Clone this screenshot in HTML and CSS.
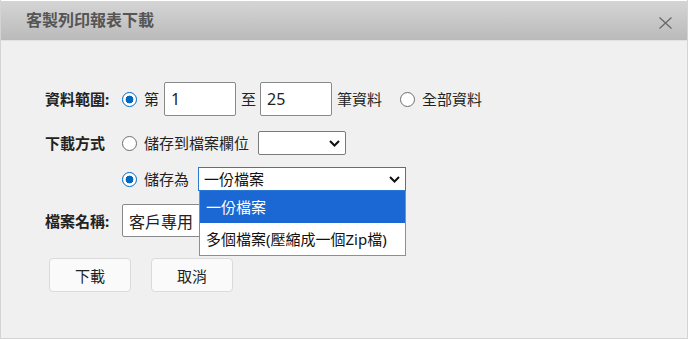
FILE: index.html
```html
<!DOCTYPE html>
<html lang="zh-Hant">
<head>
  <meta charset="UTF-8">
  <title>客製列印報表下載</title>
  <link rel="stylesheet" href="styles.css">
</head>
<body>
  <div class="dialog">
    <div class="dialog-header">
      <span class="dialog-title">客製列印報表下載</span>
      <span class="dialog-close">
        <svg width="13" height="12" viewBox="0 0 13 12"><path d="M0.5 0.5 L12.5 11.5 M12.5 0.5 L0.5 11.5" stroke="#666" stroke-width="1.2" fill="none"/></svg>
      </span>
    </div>

    <div class="dialog-body">
      <div class="form-row row-range">
        <label class="form-label">資料範圍:</label>
        <input type="radio" name="range" class="radio" checked>
        <span class="radio-text">第</span>
        <input type="text" class="text-input num-input" value="1">
        <span class="mid-text">至</span>
        <input type="text" class="text-input num-input" value="25">
        <span class="mid-text">筆資料</span>
        <input type="radio" name="range" class="radio radio-all">
        <span class="radio-text">全部資料</span>
      </div>

      <div class="form-row row-method">
        <label class="form-label">下載方式</label>
        <input type="radio" name="method" class="radio">
        <span class="radio-text">儲存到檔案欄位</span>
        <div class="select-wrap field-select">
          <select class="select"></select>
          <svg class="chevron" width="11" height="7" viewBox="0 0 11 7"><path d="M1 1 L5.5 5.5 L10 1" stroke="#111" stroke-width="2" fill="none"/></svg>
        </div>
      </div>

      <div class="form-row row-saveas">
        <span class="form-label"></span>
        <input type="radio" name="method" class="radio" checked>
        <span class="radio-text">儲存為</span>
        <div class="select-wrap file-select">
          <select class="select select-open">
            <option>一份檔案</option>
            <option>多個檔案(壓縮成一個Zip檔)</option>
          </select>
          <svg class="chevron" width="11" height="7" viewBox="0 0 11 7"><path d="M1 1 L5.5 5.5 L10 1" stroke="#111" stroke-width="2" fill="none"/></svg>
          <ul class="dropdown">
            <li class="dropdown-item active">一份檔案</li>
            <li class="dropdown-item">多個檔案(壓縮成一個Zip檔)</li>
          </ul>
        </div>
      </div>

      <div class="form-row row-name">
        <label class="form-label">檔案名稱:</label>
        <input type="text" class="text-input name-input" value="客戶專用">
      </div>

      <div class="button-row">
        <button class="btn">下載</button>
        <button class="btn">取消</button>
      </div>
    </div>
  </div>
</body>
</html>
```

FILE: styles.css
```css
* {
  box-sizing: border-box;
}

body {
  margin: 0;
  font-family: "Noto Sans", "Noto Sans CJK TC", sans-serif;
  color: #222;
  background: #fff;
}

.dialog {
  width: 688px;
  height: 339px;
  background: #f0f0f0;
  border: 1px solid #d4d4d4;
  border-top: none;
}

.dialog-header {
  height: 41px;
  display: flex;
  align-items: center;
  justify-content: space-between;
  padding: 0 15px 0 25px;
  background: linear-gradient(#d5d5d5, #bababa);
  border-top: 1px solid #fff;
  border-bottom: 1px solid #e2e2e2;
}

.dialog-title {
  font-size: 16px;
  font-weight: bold;
  color: #555;
  line-height: 20px;
  margin-top: -2px;
}

.dialog-close {
  display: flex;
  margin-top: 4px;
}

.dialog-body {
  padding: 41px 0 0 44px;
}

.form-row {
  display: flex;
  align-items: center;
  font-size: 15px;
  line-height: 20px;
}

.row-range {
  height: 34px;
}

.row-method {
  height: 24px;
  margin-top: 15px;
}

.row-saveas {
  height: 24px;
  margin-top: 12px;
}

.row-name {
  height: 33px;
  margin-top: 13px;
}

.form-label {
  width: 77px;
  font-weight: bold;
  flex-shrink: 0;
}

.radio {
  appearance: none;
  width: 15px;
  height: 15px;
  margin: 0 7px 0 0;
  border: 1px solid #6d6d6d;
  border-radius: 50%;
  background: #fff;
  flex-shrink: 0;
}

.radio:checked {
  border: 1.5px solid #0067c0;
  background: radial-gradient(circle, #0067c0 0 3.6px, #fff 4.2px);
}

.radio-all {
  margin-left: 14px;
}

.radio-text {
  white-space: nowrap;
}

.mid-text {
  margin: 0 4px 0 5px;
  white-space: nowrap;
}

.row-range .radio-text:first-of-type {
  margin-right: 5px;
}

.text-input {
  height: 34px;
  border: 1px solid #8a8a8a;
  border-radius: 2px;
  background: #fff;
  font: inherit;
  font-size: 16px;
  color: #222;
  padding: 0 6px;
  outline: none;
}

.num-input {
  width: 72px;
}

.name-input {
  width: 200px;
  height: 33px;
}

.select-wrap {
  position: relative;
  height: 24px;
  margin-left: 9px;
}

.field-select {
  width: 88px;
}

.file-select {
  width: 208px;
}

.select {
  appearance: none;
  width: 100%;
  height: 24px;
  border: 1px solid #7a7a7a;
  border-radius: 2px;
  background: #fff;
  font: inherit;
  font-size: 15px;
  color: #111;
  padding: 0 5px;
  outline: none;
}

.select-open {
  border-color: #2a78d4;
  border-radius: 0;
}

.chevron {
  position: absolute;
  right: 6px;
  top: 9px;
  pointer-events: none;
}

.dropdown {
  position: absolute;
  top: 24px;
  left: 1px;
  width: 207px;
  margin: 0;
  padding: 0;
  list-style: none;
  background: #fff;
  border: 1px solid #8f8f8f;
  border-top: none;
  z-index: 2;
}

.dropdown-item {
  height: 32px;
  line-height: 32px;
  padding-left: 6px;
  font-size: 15px;
  color: #111;
  white-space: nowrap;
}

.dropdown-item.active {
  background: #1b67d3;
  color: #fff;
}

.button-row {
  display: flex;
  gap: 20px;
  margin: 21px 0 0 4px;
}

.btn {
  width: 82px;
  height: 34px;
  background: #fafafa;
  border: 1px solid #dadada;
  border-radius: 4px;
  font: inherit;
  font-size: 15px;
  color: #222;
}
```
